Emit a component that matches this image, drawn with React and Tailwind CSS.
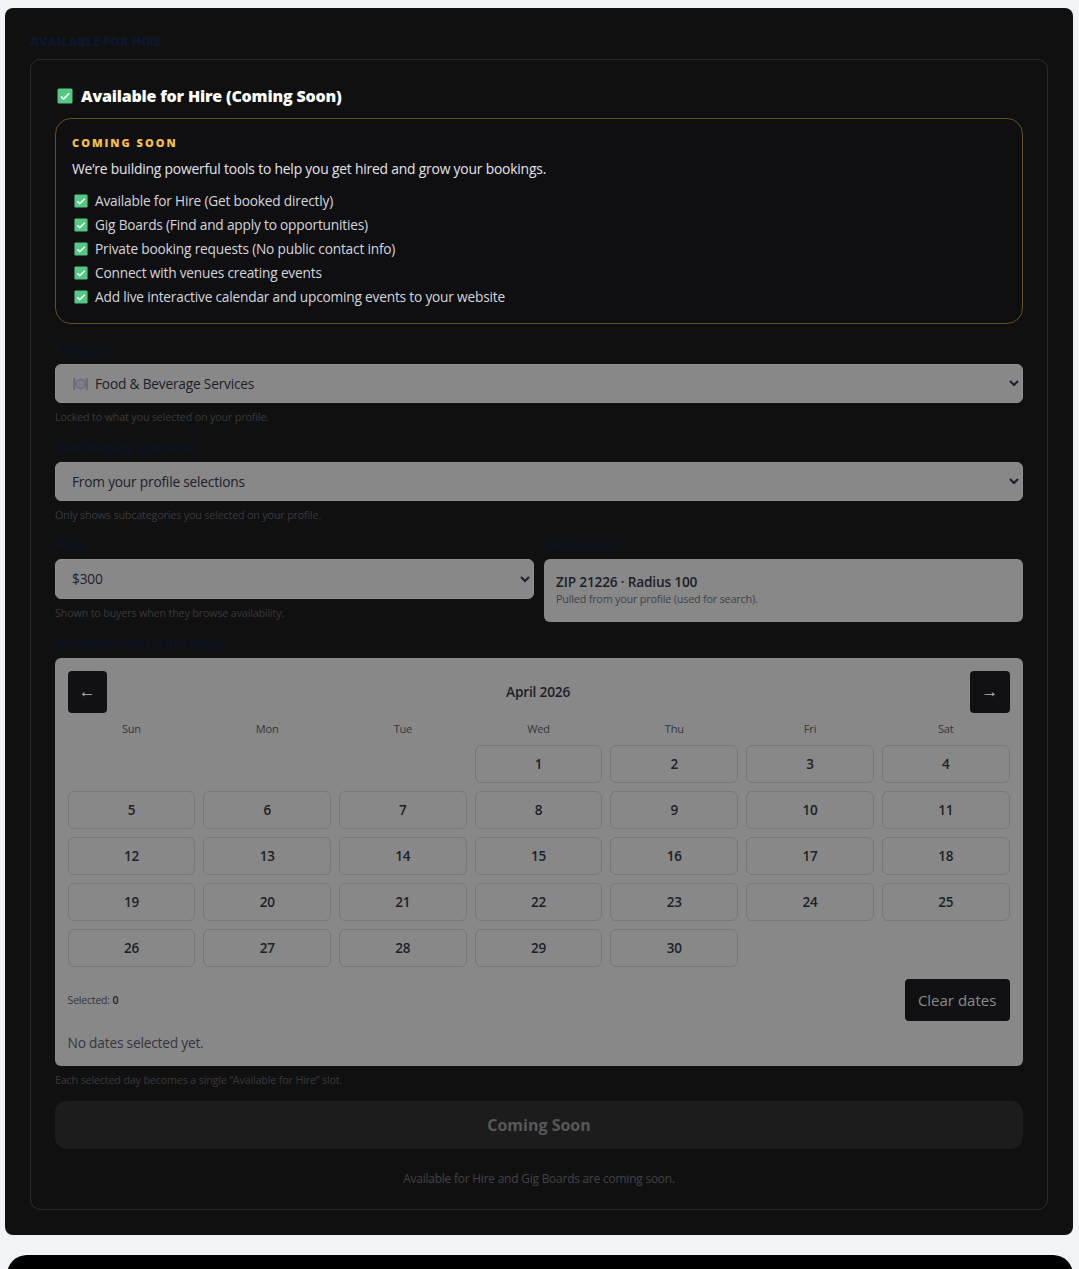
import React from 'react';

const FEATURES = [
  'Available for Hire (Get booked directly)',
  'Gig Boards (Find and apply to opportunities)',
  'Private booking requests (No public contact info)',
  'Connect with venues creating events',
  'Add live interactive calendar and upcoming events to your website',
];

const WEEKDAYS = ['Sun', 'Mon', 'Tue', 'Wed', 'Thu', 'Fri', 'Sat'];
const DAYS = Array.from({ length: 30 }, (_, i) => i + 1);

function CheckEmoji({ className }) {
  return (
    <svg viewBox="0 0 16 16" className={className}>
      <rect x="0.5" y="0.5" width="15" height="15" rx="1.5" fill="#55c884" />
      <path d="M3.8 8.4 6.6 11 12.2 5.4" fill="none" stroke="#f2fff6" strokeWidth="1.7" />
    </svg>
  );
}

function PlateEmoji() {
  return (
    <svg viewBox="0 0 15 14" className="absolute top-[13px] left-[18px] h-[14px] w-[15px]">
      <circle cx="7.5" cy="7" r="5.4" fill="#716b80" />
      <circle cx="7.5" cy="7" r="3.8" fill="#807a92" />
      <rect x="0.3" y="1" width="1.9" height="12" fill="#6a6670" />
      <rect x="12.8" y="1" width="1.9" height="12" fill="#6a6670" />
    </svg>
  );
}

function Label({ children }) {
  return <label className="mb-[5px] block text-[12.5px] leading-[19px] font-extrabold text-[#0d1220]">{children}</label>;
}

function Hint({ children }) {
  return <p className="mt-[6px] text-[10.8px] leading-[16px] text-[#3a3a3e]">{children}</p>;
}

const selectClass = 'block h-[39px] w-full rounded-[6px] border border-[#8f8f8f] bg-[#888888] pl-[12px] pr-[4px] pb-[1px] text-[13.7px] text-[#1c2029]';

export default function App() {
  return (
    <div className="h-[1269px] overflow-hidden bg-[#f1f3f7] pt-[8px] pr-[6px] pl-[5px] font-['Open_Sans','Noto_Sans',sans-serif] tracking-[-0.012em]">
      <section className="rounded-[8px] bg-[#101011] p-[25px]">
        <h2 className="mb-[8px] text-[12.5px] leading-[18px] font-extrabold tracking-normal text-[#0d172c] uppercase">Available for Hire</h2>

        <div className="rounded-[10px] border border-[#2a2a2c] px-[24px] pt-[26px] pb-[22px]">
          <div className="flex items-center gap-[8px] pl-[2px]">
            <CheckEmoji className="h-[16px] w-[16px]" />
            <h3 className="text-[16px] leading-[20px] font-extrabold tracking-[-0.2px] text-white">Available for Hire (Coming Soon)</h3>
          </div>

          <div className="mt-[12px] rounded-[16px] border border-[#66501f] bg-[#0f0f12] px-[16px] pt-[16px] pb-[16px]">
            <div className="text-[11px] leading-[15px] font-black tracking-[2px] text-[#f5c04a] uppercase">Coming Soon</div>
            <p className="mt-[9px] text-[13.85px] leading-[20px] text-[#e4e4e8]">We’re building powerful tools to help you get hired and grow your bookings.</p>
            <ul className="mt-[12px] flex flex-col gap-[4px]">
              {FEATURES.map((text) => (
                <li key={text} className="flex h-[20px] items-center gap-[7px] pl-[2px] text-[13.7px] text-[#d6d6da]">
                  <CheckEmoji className="h-[14px] w-[14px]" />
                  {text}
                </li>
              ))}
            </ul>
          </div>

          <div className="mt-[16px]">
            <Label>Category</Label>
            <div className="relative">
              <select disabled className={`${selectClass} pl-[35px]`} defaultValue="food">
                <option value="food">Food &amp; Beverage Services</option>
              </select>
              <PlateEmoji />
            </div>
            <Hint>Locked to what you selected on your profile.</Hint>
          </div>

          <div className="mt-[13px]">
            <Label>Subcategory (optional)</Label>
            <select disabled className={selectClass}>
              <option>From your profile selections</option>
            </select>
            <Hint>Only shows subcategories you selected on your profile.</Hint>
          </div>

          <div className="mt-[12px] grid grid-cols-2 gap-[10px]">
            <div>
              <Label>Price</Label>
              <select disabled className={`${selectClass} h-[40px]`}>
                <option>$300</option>
              </select>
              <Hint>Shown to buyers when they browse availability.</Hint>
            </div>
            <div>
              <Label>Service area</Label>
              <div className="flex h-[63px] flex-col justify-center rounded-[6px] bg-[#888888] px-[12px] pb-[2px]">
                <div className="text-[13.7px] leading-[19px] font-semibold text-[#1c2029]">ZIP 21226 · Radius 100</div>
                <div className="text-[10.8px] leading-[16px] text-[#3d4149]">Pulled from your profile (used for search).</div>
              </div>
            </div>
          </div>

          <div className="mt-[12px]">
            <Label>Available dates (click days)</Label>
            <div className="rounded-[6px] bg-[#888888] pt-[13px] pr-[13.4px] pb-[13px] pl-[12.6px]">
              <div className="flex items-center justify-between">
                <button className="h-[42px] w-[39px] rounded-[4px] bg-[#111114] font-['Liberation_Sans',sans-serif] text-[17px] text-[#b4b4b4]">←</button>
                <div className="text-[13.7px] font-semibold text-[#1c2029]">April 2026</div>
                <button className="h-[42px] w-[40px] rounded-[4px] bg-[#111114] font-['Liberation_Sans',sans-serif] text-[17px] text-[#b4b4b4]">→</button>
              </div>

              <div className="mt-[8px] grid grid-cols-7 gap-[8px]">
                {WEEKDAYS.map((day) => (
                  <div key={day} className="text-center text-[11px] leading-[16px] text-[#33363d]">{day}</div>
                ))}
                {DAYS.map((day) => (
                  <button
                    key={day}
                    className={`h-[38px] rounded-[6px] border border-[#777779] text-[13.5px] font-semibold text-[#1c2029] ${day === 1 ? 'col-start-4' : ''}`}
                  >
                    {day}
                  </button>
                ))}
              </div>

              <div className="mt-[12px] flex items-center justify-between">
                <div className="pt-[2px] text-[10.5px] text-[#33363d]">Selected: <span className="font-semibold text-[#1c2029]">0</span></div>
                <button className="h-[42px] w-[105px] rounded-[4px] bg-[#111114] text-[15px] tracking-normal text-[#8a8a8a]">Clear dates</button>
              </div>
              <div className="mt-[12px] text-[13.7px] leading-[20px] text-[#33363d]">No dates selected yet.</div>
            </div>
            <Hint>Each selected day becomes a single “Available for Hire” slot.</Hint>
          </div>

          <button className="mt-[13px] h-[48px] w-full rounded-[12px] bg-[#1c1c1c] text-[16px] font-bold tracking-normal text-[#585858]">Coming Soon</button>
          <p className="mt-[20px] text-center text-[11.9px] leading-[18px] text-[#434346]">Available for Hire and Gig Boards are coming soon.</p>
        </div>
      </section>

      <div className="mt-[20px] ml-[2px] h-[60px] rounded-t-[20px] bg-black" />
    </div>
  );
}
